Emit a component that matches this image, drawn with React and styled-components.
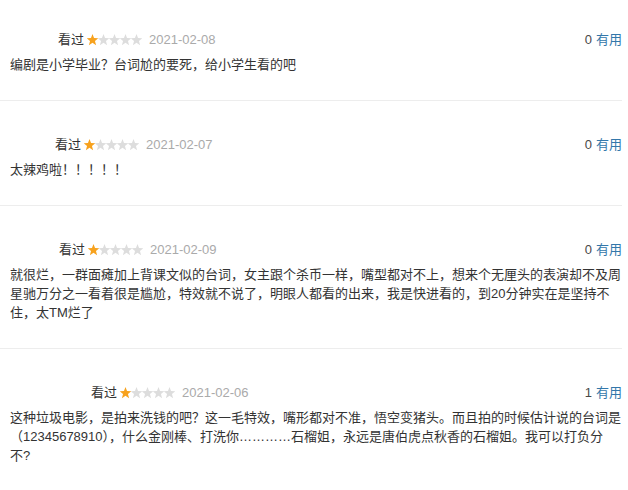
import React from "react";
import styled, { createGlobalStyle } from "styled-components";

const Global = createGlobalStyle`
  html, body { margin: 0; padding: 0; background: #fff; }
  body {
    font-family: "Liberation Sans", Arial, "Noto Sans CJK SC", sans-serif;
    font-size: 13px;
    color: #333;
  }
`;

const List = styled.div`
  width: 622px;
`;

const Item = styled.div`
  padding: 34px 0 26px 10px;
  border-bottom: 1px solid #ededed;
  &:first-child { padding-top: 30px; }
`;

const Header = styled.div`
  display: flex;
  align-items: center;
  justify-content: space-between;
  height: 20px;
  line-height: 20px;
`;

const Info = styled.div`
  display: flex;
  align-items: center;
`;

const Name = styled.span`
  display: inline-block;
  width: ${(p) => p.$w}px;
  margin-right: 4px;
  height: 14px;
`;

const Watched = styled.span`
  color: #333;
  margin-right: 3px;
`;

const Stars = styled.svg`
  display: block;
  margin-right: 7px;
`;

const Date = styled.span`
  color: #aaa;
`;

const Votes = styled.div`
  display: flex;
  align-items: center;
  color: #494949;
`;

const Useful = styled.span`
  color: #3377aa;
  margin-left: 4px;
`;

const Text = styled.p`
  margin: 5px 0 0;
  line-height: 19px;
  color: #333;
  word-break: break-all;
`;

const starPath = (cx) => {
  const pts = [];
  for (let i = 0; i < 10; i++) {
    const r = i % 2 === 0 ? 6.1 : 2.6;
    const a = -Math.PI / 2 + (i * Math.PI) / 5;
    pts.push(`${(cx + r * Math.cos(a)).toFixed(2)},${(6.2 + r * Math.sin(a)).toFixed(2)}`);
  }
  return pts.join(" ");
};

function Rating({ value }) {
  return (
    <Stars width="55" height="12" viewBox="0 0 55 12">
      {[0, 1, 2, 3, 4].map((i) => (
        <polygon
          key={i}
          points={starPath(5.5 + i * 11)}
          fill={i < value ? "#f7a21e" : "#dddddd"}
        />
      ))}
    </Stars>
  );
}

const data = [
  { w: 44, date: "2021-02-08", votes: 0, text: "编剧是小学毕业？台词尬的要死，给小学生看的吧" },
  { w: 41, date: "2021-02-07", votes: 0, text: "太辣鸡啦！！！！！" },
  {
    w: 45,
    date: "2021-02-09",
    votes: 0,
    text:
      "就很烂，一群面瘫加上背课文似的台词，女主跟个杀币一样，嘴型都对不上，想来个无厘头的表演却不及周星驰万分之一看着很是尴尬，特效就不说了，明眼人都看的出来，我是快进看的，到20分钟实在是坚持不住，太TM烂了",
  },
  {
    w: 77,
    date: "2021-02-06",
    votes: 1,
    text:
      "这种垃圾电影，是拍来洗钱的吧？这一毛特效，嘴形都对不准，悟空变猪头。而且拍的时候估计说的台词是（12345678910），什么金刚棒、打洗你…………石榴姐，永远是唐伯虎点秋香的石榴姐。我可以打负分不?",
  },
];

export default function App() {
  return (
    <>
      <Global />
      <List>
        {data.map((d, i) => (
          <Item key={i}>
            <Header>
              <Info>
                <Name $w={d.w} />
                <Watched>看过</Watched>
                <Rating value={1} />
                <Date>{d.date}</Date>
              </Info>
              <Votes>
                <span>{d.votes}</span>
                <Useful>有用</Useful>
              </Votes>
            </Header>
            <Text>{d.text}</Text>
          </Item>
        ))}
      </List>
    </>
  );
}
